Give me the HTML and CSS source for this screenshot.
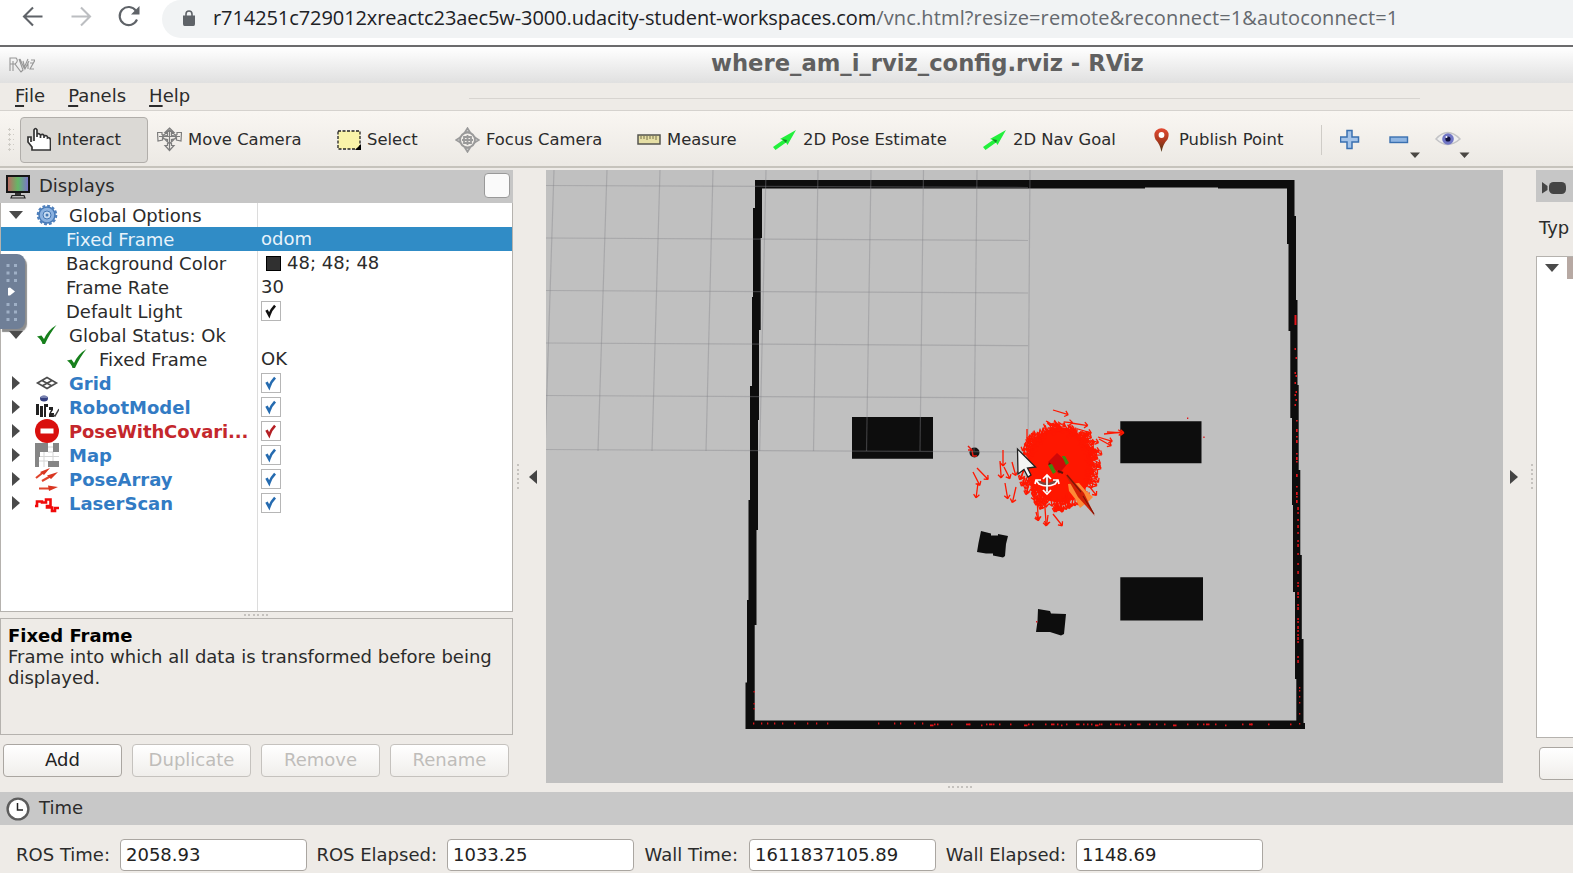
FILE: index.html
```html
<!DOCTYPE html>
<html lang="en">
<head>
<meta charset="utf-8">
<title>RViz</title>
<link rel="stylesheet" href="styles.css">
</head>
<body>
<svg width="0" height="0" class="defs">
  <symbol id="check" viewBox="0 0 20 20"><path d="M5 9L8 14.500C9.500 10 11 7.500 14.500 4" fill="none" stroke="currentColor" stroke-width="3"/></symbol>
  <symbol id="tick" viewBox="0 0 20 20"><path d="M0 11.500L4.500 10.500L7 14Q11 5 19.500 0Q13 8 8 19H5.500Q4 14 0 11.500Z" fill="#17801c"/></symbol>
  <symbol id="arrow" viewBox="0 0 24 20"><path d="M23 0L7 9L10 10L0 17L2.500 20L13 12.500L14.500 15Z" fill="#22f03c"/><path d="M9 9L14 10L13 13Z" fill="#108a20"/></symbol>
</svg>

<div class="browser">
  <svg class="nav" viewBox="0 0 145 38" width="145" height="38" fill="none" stroke="#5f6368" stroke-width="2.100">
    <path d="M42.500 16.500H24.500M33 7.500L24 16.500L33 25.500"/>
    <path stroke="#bcbec1" d="M71.500 16.500H89.500M81 7.500L90 16.500L81 25.500"/>
    <path d="M137 19.500A9 9 0 1 1 136 10.800"/><path d="M139.500 6V14.500H131Z" fill="#5f6368" stroke="none"/>
  </svg>
  <div class="address">
    <svg viewBox="0 0 12 16" width="12" height="16"><path d="M0 5.500H12V14Q12 16 10.500 16H1.500Q0 16 0 14Z" fill="#5f6368"/><path d="M3 6V4A3 3 0 0 1 9 4V6" fill="none" stroke="#5f6368" stroke-width="1.600"/></svg>
    <span class="url">r714251c729012xreactc23aec5w-3000.udacity-student-workspaces.com<span class="path">/vnc.html?resize=remote&amp;reconnect=1&amp;autoconnect=1</span></span>
  </div>
</div>

<div class="titlebar">
  <svg class="logo" viewBox="0 0 26 16" width="26" height="16" fill="none" stroke="#969696" stroke-width="1.100"><path d="M1 14V1H7Q10 4 6 7L12 15L14 13L10 2M1 7H6M4 14V4M11 2L15 11L19 2M14 4L16 12L20 4M19 12V5M22 3H26L21 12H25M21 6H24" /></svg>
  <span class="title">where_am_i_rviz_config.rviz - RViz</span>
</div>

<div class="menubar">
  <span><u>F</u>ile</span><span><u>P</u>anels</span><span><u>H</u>elp</span>
  <i class="artifact"></i>
</div>

<div class="toolbar">
  <i class="grip"></i>
  <div class="tool active"><svg width="24" height="26" viewBox="0 0 24 26"><path d="M7 14V3Q8.500 0 10 3V10V7Q12 6 13.500 8V11V8Q16 6.500 17 8.500V11V9Q20 8 20.500 10V11Q23 10 23.500 13V23H5V20L1 15V10H4V15" fill="#fff" stroke="#333" stroke-width="1.700"/></svg><span>Interact</span></div>
  <div class="tool"><svg width="25" height="25" viewBox="0 0 25 25" fill="none" stroke="#7d7d7d" stroke-width="1.200"><path d="M12.500 1L17 5.500H14.500V8.500Q17 8.500 20 7.500V5.500L24.500 5.500L24 14L19.500 13V11.500L14.500 12.500V18.500H17L12.500 23.500L8 18.500H10.500V12.500L5.500 11.500V13L1 14L.5 5.500H5V7.500Q8 8.500 10.500 8.500V5.500H8ZM5 9.500L12.500 3L20 9.500L12.500 17ZM2 9.500H23M12.500 3V23"/></svg><span>Move Camera</span></div>
  <div class="tool"><svg width="24" height="20" viewBox="0 0 24 20"><rect x="1" y="1" width="22" height="18" fill="#f9f3a9" stroke="#222" stroke-width="1.300" stroke-dasharray="3 1.500"/><path d="M24 14V20H18Z"/></svg><span>Select</span></div>
  <div class="tool"><svg width="25" height="26" viewBox="0 0 25 26" fill="none" stroke="#9a9a9a" stroke-width="2"><circle cx="12.500" cy="13" r="7.500"/><path d="M9 10H16V16H9ZM12.500 8V18M7 13H18" stroke-width="1.800"/><path d="M10 5L12.500 1L15 5ZM10 21L12.500 25L15 21ZM5 10.500L1 13L5 15.500ZM20 10.500L24 13L20 15.500Z" fill="#ccc" stroke-width="1.500"/></svg><span>Focus Camera</span></div>
  <div class="tool"><svg width="24" height="11" viewBox="0 0 24 11"><rect x="1" y="1" width="22" height="9" fill="#e6dfa5" stroke="#55554f" stroke-width="1.500"/><path d="M4 2V5M7 2V5M10 2V6M13 2V5M16 2V5M19 2V6" stroke="#77704d"/></svg><span>Measure</span></div>
  <div class="tool"><svg width="24" height="20"><use href="#arrow"/></svg><span>2D Pose Estimate</span></div>
  <div class="tool"><svg width="24" height="20"><use href="#arrow"/></svg><span>2D Nav Goal</span></div>
  <div class="tool"><svg width="24" height="26" viewBox="0 0 24 26"><defs><linearGradient id="pin" x2="0" y2="1"><stop stop-color="#e34a32"/><stop offset=".55" stop-color="#a8381d"/><stop offset="1" stop-color="#4a3513"/></linearGradient></defs><path d="M12.500 25Q11 17 6.500 12.500Q4 7 7 3.500Q12.500-1 18 3.500Q21 7 18.500 12.500Q14 17 12.500 25Z" fill="url(#pin)"/><circle cx="12.500" cy="8" r="2.900" fill="#fff"/></svg><span>Publish Point</span></div>
  <i class="rule"></i>
  <svg class="extras" width="134" height="34" viewBox="0 0 134 34">
    <path d="M7 1.500H12V8H18.500V13H12V19.500H7V13H.500V8H7Z" fill="#a4c3e8" stroke="#3a70b0" stroke-width="1.500"/>
    <rect x="50" y="8" width="17.500" height="5.500" fill="#8fb5e2" stroke="#3a70b0" stroke-width="1.400"/>
    <path d="M70 23.500H80L75 29ZM119.500 23.500H129.500L124.500 29Z" fill="#4a4743"/>
    <path d="M96 10Q107.500-3 120 10Q107.500 21 96 10Z" fill="#eee" stroke="#c3c3c6" stroke-width="1.500"/><circle cx="108" cy="10" r="5.800" fill="#7176c5"/><circle cx="108" cy="10" r="2.600" fill="#11123e"/><circle cx="106.500" cy="8" r="1" fill="#fff"/>
  </svg>
</div>

<div class="workspace">
  <section class="displays">
    <header class="dock-head"><svg width="24" height="25" viewBox="0 0 24 25"><defs><linearGradient id="rgb"><stop stop-color="#c16464"/><stop offset=".5" stop-color="#64b867"/><stop offset="1" stop-color="#7d6fd0"/></linearGradient></defs><rect x="1" y="1" width="22" height="16" fill="url(#rgb)" stroke="#161616" stroke-width="2"/><path d="M9 18H15V20H9Z" fill="#333"/><path d="M6 20.500H18L19 23H5Z" fill="#bbb" stroke="#222" stroke-width="1.200"/></svg><span>Displays</span><i class="box"></i></header>
    <div class="tree">
      <div class="row"><i class="exp open"></i><svg class="ic" viewBox="0 0 24 24"><circle cx="12" cy="12" r="8" fill="#8cb2e0" stroke="#4477b4" stroke-width="1.500"/><circle cx="12" cy="12" r="9" fill="none" stroke="#4f80bd" stroke-width="2.600" stroke-dasharray="2.800 1.900"/><circle cx="12" cy="12" r="4" fill="#c8dbf1" stroke="#4477b4"/><circle cx="12" cy="12" r="1.500" fill="#4477b4"/></svg><span>Global Options</span><b></b></div>
      <div class="row sel leaf"><span>Fixed Frame</span><b>odom</b></div>
      <div class="row leaf"><span>Background Color</span><b><i class="swatch"></i>48; 48; 48</b></div>
      <div class="row leaf"><span>Frame Rate</span><b>30</b></div>
      <div class="row leaf"><span>Default Light</span><b><svg class="cb dark"><use href="#check"/></svg></b></div>
      <div class="row"><i class="exp open"></i><svg class="ic tick"><use href="#tick"/></svg><span>Global Status: Ok</span><b></b></div>
      <div class="row sub"><svg class="ic tick"><use href="#tick"/></svg><span>Fixed Frame</span><b>OK</b></div>
      <div class="row item"><i class="exp"></i><svg class="ic" viewBox="0 0 24 24"><path d="M2.500 12L12 6.500L21.500 12L12 17.500ZM7 9.500L17 15M17 9.500L7 15" fill="none" stroke="#4c4c4c" stroke-width="1.600"/></svg><span>Grid</span><b><svg class="cb"><use href="#check"/></svg></b></div>
      <div class="row item"><i class="exp"></i><svg class="ic" viewBox="0 0 24 24"><ellipse cx="9" cy="3.500" rx="4" ry="3" fill="#354080"/><path d="M6 2H12" stroke="#bcc4e0"/><path d="M1 9H4V20H1ZM5 11H8V22H5ZM9 9H13V12H11V22H9ZM14 12H18V15L16 18H19V22H14V19L16 15H14Z" fill="#222"/><path d="M18 20L20 21L24 14" fill="none" stroke="#444" stroke-width="1.500"/></svg><span>RobotModel</span><b><svg class="cb"><use href="#check"/></svg></b></div>
      <div class="row item err"><i class="exp"></i><svg class="ic" viewBox="0 0 24 24"><circle cx="12" cy="12" r="12" fill="#d9100e"/><rect x="5.500" y="9.500" width="13" height="5" fill="#fff"/></svg><span>PoseWithCovari...</span><b><svg class="cb"><use href="#check"/></svg></b></div>
      <div class="row item"><i class="exp"></i><svg class="ic" viewBox="0 0 24 24"><path d="M0 0H13V9H5V14H4V24H0ZM18 0H24V9H18ZM13 18H24V24H13Z" fill="#858585"/><path d="M13 4H18M9 9V24M5 13.500H24M13 9H18V18M4 18H13" stroke="#d5d5d5" fill="none"/></svg><span>Map</span><b><svg class="cb"><use href="#check"/></svg></b></div>
      <div class="row item"><i class="exp"></i><svg class="ic" viewBox="0 0 24 24"><path d="M1 11L8 5.500M7 14L15 9.500M4 21.500H14" stroke="#e0442c" stroke-width="2.200"/><path d="M15 1L5 5L9 8ZM23 5L12 8.500L16 12ZM23 20L13 18.500L14 24Z" fill="#d93621"/></svg><span>PoseArray</span><b><svg class="cb"><use href="#check"/></svg></b></div>
      <div class="row item"><i class="exp"></i><svg class="ic" viewBox="0 0 24 24"><path d="M0 15H2V10.500H7V11.500H11V8.500H15.500V15H12V16.500H17V20H20V17H24" fill="none" stroke="#f00a0a" stroke-width="2.600"/></svg><span>LaserScan</span><b><svg class="cb"><use href="#check"/></svg></b></div>
      <div class="fill"></div>
    </div>
    <div class="split"><i></i></div>
    <div class="help"><strong>Fixed Frame</strong><p>Frame into which all data is transformed before being displayed.</p></div>
    <div class="buttons"><button>Add</button><button disabled>Duplicate</button><button disabled>Remove</button><button disabled>Rename</button></div>
  </section>
  <div class="gutter left"><i class="dots"></i><i class="tri"></i></div>
  <svg class="view" viewBox="546 170 957 613" width="957" height="613">
    <path d="M755 180H1294.500V216H1296V300H1297.500V385H1298.700V470H1300.300V555H1301.800V639H1303.500V723H1305V729H745.500V682.500H747V600H748.500V500H750V386H752V297H753V208H755ZM762 188.500V238H760.700V330H759V420H758V530H756.500V625H754.700V720.500H1296.300V679H1295V592H1293V505H1292V418H1290.300V331H1288.500V244H1287V188.500H1218V187.500H1145V188.500Z" fill="#0d0d0d" fill-rule="evenodd"/>
    <path d="M852 417H933V458.700H852ZM1120.300 421.300H1201.500V463.200H1120.300ZM1120.300 577.300H1203V620.600H1120.300Z" fill="#0d0d0d"/>
    <path d="M981 531L991 533.500V535.500H998V534L1008 536L1006 544L1005 556L1003 557.500L993 555.500V553.500H986L977 552L978.500 543ZM1038 609L1050 611L1051 613.500L1066 614L1064 634L1061 635.500L1050 632L1036 632L1037.500 621Z" fill="#0d0d0d"/>
    <circle cx="974.500" cy="452.500" r="5" fill="#151515"/>
    <path d="M968 446L972 450L973 456H977M968 450H971" fill="none" stroke="#e81b10" stroke-width="1.500"/>
    <g id="grid" fill="none" stroke="#858589" stroke-opacity=".4" stroke-width="1.200"></g>
    <g id="cloud" fill="none" stroke="#ff1700" stroke-width="1.300"></g>
    <path d="M1048 462L1057 453L1068 463L1059 474Z" fill="#d00808"/>
    <path d="M1058 471L1063 473M1049 465L1050 463" stroke="#5c1208" stroke-width="2"/>
    <path d="M1048 465L1052 464L1056 472L1053 474ZM1062 456L1065 456L1069 463L1066 465Z" fill="#3f8a10"/>
    <path d="M1068 484L1079 483L1085 490L1093 497L1089 501L1080 508L1076 500L1069 491Z" fill="#ff8a36"/>
    <path d="M1065 474L1069 476L1084 493L1095 516L1078 497Z" fill="#d22005"/>
    <path d="M1067 475L1081 492M1083 496L1094 514" stroke="#7d1708" stroke-width="1.200"/>
    <g fill="none" stroke="#79463e" stroke-width="3"><path d="M1047 477V492M1037 480Q1047 489 1057 480"/></g>
    <path d="M1047 476V492M1043 479L1047 475L1051 479M1043 490L1047 494L1051 490M1036 480L1039 484Q1047 488 1055 484L1058 480M1035 484L1036 480L1041 480M1059 484L1058 480L1053 480" fill="none" stroke="#fff" stroke-width="1.700"/>
    <path d="M1017.500 449L1018 474L1024 469.500L1028 477L1031 475L1027.500 468L1035.500 467Z" fill="#f5f5f5" stroke="#222" stroke-width="1.300"/>
    <g id="scan" fill="#e3141a"></g>
  </svg>
  <div class="gutter right"><i class="tri"></i><i class="dots"></i></div>
  <section class="views">
    <header><svg width="25" height="14" viewBox="0 0 25 14" fill="#454545"><path d="M0 1L5.500 5V9L0 12.500Z"/><rect x="7" y="1" width="17" height="12" rx="4.500"/></svg></header>
    <div class="type">Typ</div>
    <div class="viewtree"><i class="exp open"></i><i class="cell"></i></div>
    <button></button>
  </section>
</div>

<div class="hsplit"><i></i></div>
<div class="timehead"><svg width="24" height="26" viewBox="0 0 24 26"><circle cx="12" cy="13" r="10.400" fill="#fff" stroke="#5c5c5c" stroke-width="2.400"/><path d="M11.500 7V14H17" fill="none" stroke="#222" stroke-width="1.500"/></svg><span>Time</span></div>
<div class="times">
  <label>ROS Time:</label><div class="field">2058.93</div>
  <label>ROS Elapsed:</label><div class="field">1033.25</div>
  <label>Wall Time:</label><div class="field">1611837105.89</div>
  <label>Wall Elapsed:</label><div class="field">1148.69</div>
</div>

<div class="vnc"><svg width="26" height="75" viewBox="0 0 26 75"><path d="M8 34L10 33.500L15 37.500L10 41.500H8Z" fill="#fff"/><path d="M8 10V29M15.500 10V29M8 49V68M15.500 49V68" stroke="#9fb0c6" stroke-width="3" stroke-dasharray="3 4.500"/></svg></div>
<script src="scene.js"></script>
</body>
</html>
```
FILE: styles.css
```css
* { box-sizing: border-box; }
body { margin: 0; width: 1573px; height: 873px; overflow: hidden; position: relative; background: #eeebe7; color: #2b2b2b; font: 18px/21px "DejaVu Sans", sans-serif; display: flex; flex-direction: column; }
i, b { font-style: normal; font-weight: normal; }
svg { display: block; flex: none; }
.defs { position: absolute; }

.browser { height: 47px; flex: none; background: #fff; border-bottom: 2px solid #6b6b6d; display: flex; align-items: flex-start; }
.nav { margin-right: 17px; }
.address { flex: 1; height: 38px; margin-right: -20px; padding: 0 0 2px 21px; border-radius: 0 0 19px 19px / 0 0 19px 19px; border-radius: 19px; background: #f1f3f4; display: flex; align-items: center; gap: 18px; }
.url { font: 20px/34px "Open Sans", "Noto Sans", sans-serif; letter-spacing: -.08px; color: #202124; white-space: nowrap; }
.path { color: #65696e; letter-spacing: .14px; }

.titlebar { height: 36px; flex: none; background: linear-gradient(#fff, #e0e0e0); display: flex; align-items: center; }
.logo { margin-left: 9px; }
.title { font-weight: bold; font-size: 22.700px; color: #606060; margin-left: 676px; padding-bottom: 3px; white-space: nowrap; }
.menubar { height: 28px; flex: none; display: flex; align-items: center; padding: 0 0 2px 15px; gap: 23px; border-bottom: 1px solid #d5d2ce; position: relative; }
.menubar u { text-underline-offset: 3px; text-decoration-thickness: 1.500px; }
.artifact { position: absolute; left: 469px; top: 15px; width: 951px; height: 1px; background: #d7d4d0; }

.toolbar { height: 57px; flex: none; border-bottom: 2px solid #c6c3bc; background: linear-gradient(#f9f6f2, #ece9e4); display: grid; grid-template-columns: 20px 137px 180px 118px 182px 136px 210px 166px 172px 20px 1fr; align-items: center; font-size: 16.400px; padding-top: 2px; }
.grip { width: 7px; height: 26px; margin-left: 7px; background: radial-gradient(circle, #cfccc6 1px, transparent 1.200px) 0 0 / 5px 5px; }
.tool { display: flex; align-items: center; gap: 6px; white-space: nowrap; }
.tool.active { width: 128px; height: 46px; padding-left: 6px; border: 1.500px solid #b1aeaa; border-radius: 4px; background: #dbd9d5; }
.rule { width: 1px; height: 30px; background: #cfccc7; }
.extras { margin: 12px 0 0 -1px; }

.workspace { height: 615px; flex: none; display: flex; padding-top: 2px; }
.displays { width: 513px; display: flex; flex-direction: column; }
.dock-head { height: 33px; background: #c6c6c6; display: flex; align-items: center; padding: 0 3px 2px 6px; gap: 9px; }
.dock-head svg { margin-top: 3px; }
.box { margin-left: auto; width: 26px; height: 25px; border: 1.500px solid #999; border-radius: 4px; background: #fafafa; }
.tree { height: 409px; border: 1px solid #b5b2ae; border-top: 0; background: #fff; display: flex; flex-direction: column; }
.row { height: 24px; flex: none; display: grid; grid-template-columns: 34px 34px 188px 1fr; align-items: center; white-space: nowrap; }
.row b { height: 24px; line-height: 24px; border-left: 1px solid #dcdcdc; padding-left: 3px; display: flex; align-items: center; }
.row.leaf { grid-template-columns: 256px 1fr; }
.row.leaf > span { padding-left: 65px; }
.row.sub { grid-template-columns: 34px 158px 1fr; padding-left: 64px; }
.row.sel { background: #308cc6; color: #e8f3fb; }
.row.sel b { border-color: #308cc6; }
.item > span { font-weight: bold; color: #327bc4; }
.item.err > span { color: #c4272c; letter-spacing: -.1px; }
.fill { flex: 1; width: 257px; border-right: 1px solid #dcdcdc; }
.ic { width: 24px; height: 24px; }
.tick { width: 20px; height: 20px; margin-left: 2px; }
.exp { width: 0; height: 0; margin-left: 11px; border: 7px solid transparent; border-left: 8px solid #4a4a4a; border-right: 0; }
.exp.open { margin-left: 8px; border: 7px solid transparent; border-top: 8px solid #4a4a4a; border-bottom: 0; }
.cb { width: 20px; height: 20px; border: 1px solid #b6b6b6; background: #fff; color: #256bb0; }
.cb.dark { color: #111; }
.err .cb { color: #b41f24; }
.swatch { width: 15px; height: 15px; margin: 0 6px 0 5px; background: #303030; border: 1px solid #000; }
.split { height: 6px; display: flex; justify-content: center; align-items: center; }
.split i, .hsplit i { width: 26px; height: 2px; background: repeating-linear-gradient(90deg, #c5c2be 0 2px, transparent 2px 4.500px); }
.help { height: 117px; border: 1px solid #b5b2ae; padding: 6px 7px; }
.help strong { color: #000; display: block; }
.help p { margin: 0; }
.buttons { display: flex; gap: 10px; padding: 9px 3px 0; }
button { width: 119px; height: 33px; padding: 0 0 2px; border: 1.500px solid #aaa6a1; border-radius: 4px; background: linear-gradient(#fff, #f0eeeb); font: 18px "DejaVu Sans", sans-serif; color: #222; }
button:disabled { color: #bfbdba; border-color: #c5c2be; }

.gutter { width: 33px; display: flex; align-items: center; }
.dots { width: 2px; height: 26px; background: repeating-linear-gradient(#c5c2be 0 2px, transparent 2px 4.500px); }
.gutter.left .dots { margin: 0 10px 0 4px; }
.tri { border: 7px solid transparent; border-right: 8px solid #444; border-left: 0; }
.right .tri { border-right: 0; border-left: 8px solid #444; margin: 0 13px 0 7px; }
.view { background: #c0c0c0; }
.views { width: 37px; overflow: hidden; }
.views header { height: 32px; background: #c6c6c6; display: flex; align-items: center; padding: 3px 0 0 6px; }
.type { height: 54px; line-height: 51px; padding-left: 3px; }
.viewtree { height: 482px; width: 60px; border: 1.500px solid #b5b2ae; background: #fff; display: flex; align-items: flex-start; }
.viewtree .exp { margin-top: 7px; }
.cell { width: 30px; height: 22px; margin-left: 8px; background: #b7a9a3; }
.views button { margin: 9px 0 0 3px; }

.hsplit { height: 9px; flex: none; display: flex; align-items: center; justify-content: center; padding: 0 0 2px 349px; }
.timehead { height: 33px; flex: none; background: #c8c8c8; display: flex; align-items: center; gap: 9px; padding-left: 6px; }
.timehead span { margin-top: -3px; }
.times { flex: 1; display: flex; align-items: flex-start; padding-top: 14px; }
.times label { height: 32px; line-height: 31px; white-space: nowrap; text-align: right; width: 110px; margin-right: 10px; }
.times label:nth-of-type(2) { width: 130px; }
.times label:nth-of-type(3) { width: 104px; margin-right: 11px; }
.times label:nth-of-type(4) { width: 130px; }
.field { width: 187px; height: 32px; line-height: 29px; padding-left: 5px; border: 1.500px solid #aaa6a1; border-radius: 4px; background: #fff; color: #222; }

.vnc { position: absolute; left: 0; top: 254px; width: 25px; height: 75px; border-radius: 0 8px 8px 0; background: #6f7f97; box-shadow: 2px 3px 1px rgba(80, 80, 80, .65); }
```
FILE: scene.js
```js
// Grid: [xTop, xBottom] for columns, [yLeft, yRight] for rows
const cols = [[554, 545], [607, 598], [660, 652], [713, 706], [766, 759.7], [818, 813.5], [871, 866.5], [923.5, 920], [977, 974], [1030, 1028]];
const rows = [[185.500, 187.500], [238, 240.500], [290.500, 293], [343, 345.700], [395.500, 398], [449.500, 452]];
document.getElementById('grid').innerHTML =
  cols.map(([a, b]) => `<path d="M${a} 170L${b} 451"/>`).join('') +
  rows.map(([a, b]) => `<path d="M546 ${a}L1028 ${b}"/>`).join('');

// Seeded generator keeps the particle layout stable
let seed = 7;
const rnd = () => (seed = (seed * 16807) % 2147483647) / 2147483647;
const arrow = (x, y, a, len) => {
  const ex = x + Math.cos(a) * len, ey = y + Math.sin(a) * len;
  const h = t => `M${ex} ${ey}L${ex - Math.cos(a + t) * 4.500} ${ey - Math.sin(a + t) * 4.500}`;
  return `<path d="M${x} ${y}L${ex} ${ey}${h(.7)}${h(-.7)}"/>`;
};
let out = '<ellipse cx="1060" cy="465" rx="32" ry="37" fill="#ff1700"/>';
for (let i = 0; i < 210; i++) {
  const t = rnd() * Math.PI * 2, k = .82 + rnd() * .24;
  const right = Math.cos(t) > .3;
  const dir = Math.cos(t) < -.3 ? 1.200 + rnd() * .8 : Math.sin(t) > .6 ? 1 + rnd() * .9 : right ? .2 + rnd() : rnd() * 1.200;
  out += arrow(1057 + Math.cos(t) * 34 * k, 462 + Math.sin(t) * 40 * k, dir, 9);
}
[[1053, 410, .3, 16], [1071, 423, .15, 17], [1078, 429, .3, 14], [1084, 433, .6, 9], [1098, 437, .3, 15], [1099, 439, .5, 14], [1104, 434, -.1, 18], [1107, 432, .05, 17],
 [1003, 450, 1.570, 16], [1000, 461, 1.500, 17], [1004, 467, 1.100, 13], [1012, 462, 1.300, 14], [977, 468, .8, 16], [973, 472, 1.100, 15], [978, 483, 1.700, 15],
 [1005, 483, 1.400, 16], [1016, 487, 1.800, 16], [1037, 500, 1.500, 20], [1045, 508, 1.500, 18], [1053, 514, .9, 15], [1048, 515, 1.700, 10], [1036, 512, 1.300, 9],
 [1027, 429, 1.570, 18], [1046, 421, .5, 14], [1092, 448, .6, 12], [1090, 458, .5, 12], [1093, 474, 1, 10], [1089, 486, .9, 12], [1060, 502, 1.300, 9], [1040, 430, 1, 10], [1090, 440, .3, 9]
].forEach(a => out += arrow(...a));
document.getElementById('cloud').innerHTML = out;

// Laser hits: groups of x for the lower wall, y for the right wall
const dot = (x, y, w = 1.300, h = 1.500) => `<rect x="${x}" y="${y}" width="${w}" height="${h}"/>`;
let hits = '';
[753, 761, 767, 774, 782, 794, 807, 816, 827, 878, 894, 900, 914, 922].forEach(x => hits += dot(x, 722.500, 1.300, 2));
[930, 934, 937, 951, 966, 969, 981, 986, 989, 993, 999, 1010, 1024, 1028, 1032, 1045, 1051, 1057, 1061, 1066, 1076, 1083, 1087, 1091, 1095, 1099, 1101, 1110, 1115, 1119, 1124, 1130, 1137, 1149, 1156, 1164, 1173, 1187, 1197, 1203, 1206, 1215, 1225, 1242, 1249, 1251, 1268, 1290].forEach((x, i) => hits += dot(x, i % 6 ? 723.500 : 724.500, i % 4 ? 1.500 : 3.500, 1.800));
hits += dot(1294.500, 315, 2, 10);
[348, 357, 372, 375, 382, 391, 394, 399, 404].forEach((y, i) => hits += dot(1294.500 + i % 2, y, 1.500, 2));
[420, 429, 436, 440, 453, 457, 461, 474, 486, 492, 496, 500].forEach((y, i) => hits += dot(1296, y, 1.700, i % 2 ? 3 : 1.500));
[507, 512, 519, 525, 532, 540, 544, 553, 563, 571, 582, 585, 592, 596, 604, 607, 618, 621, 626, 630, 634, 637, 641, 656, 660].forEach((y, i) => hits += dot(1297.300, y, 1.500, i % 3 ? 2 : 3));
[687, 690, 696, 702, 713, 723].forEach(y => hits += dot(1299, y));
[[753.500, 691], [753.500, 703], [753.500, 708], [1187, 417.500], [1203.300, 436.500], [1036, 621]].forEach(p => hits += dot(...p));
document.getElementById('scan').innerHTML = hits;
```
